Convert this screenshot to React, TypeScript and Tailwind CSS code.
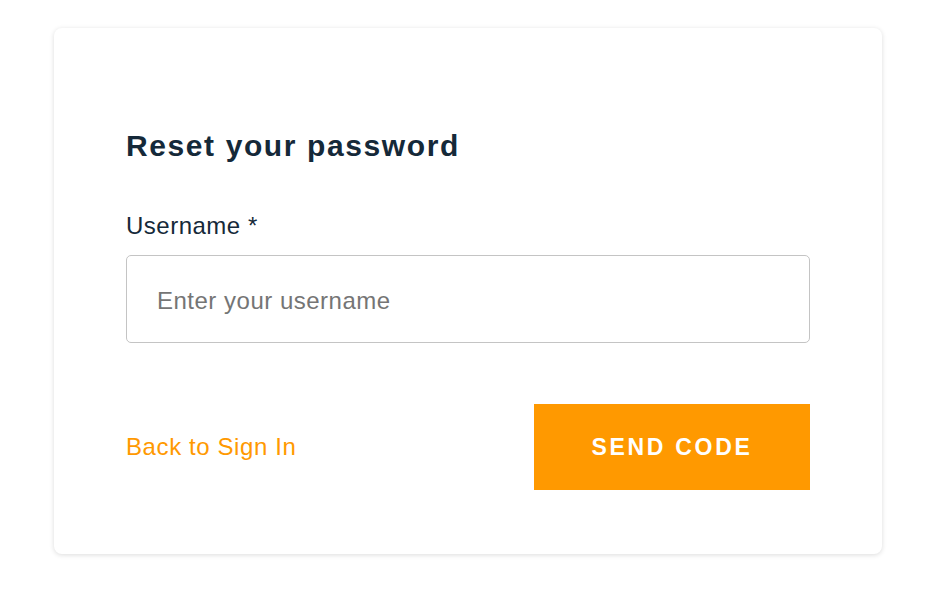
import React from 'react';

const font = { fontFamily: '"Liberation Sans", Arial, sans-serif' };

const ResetPassword = () => {
  return (
    <div className="min-h-[596px] w-[930px] bg-white pt-[28px] pl-[54px]" style={font}>
      <div className="w-[828px] rounded-[8px] bg-white px-[72px] pt-[103px] pb-[64px] shadow-[0_1px_5px_rgba(0,0,0,0.14)]">
        <h1 className="text-[30px] leading-[30px] font-bold tracking-[1.6px] text-[#152939]">
          Reset your password
        </h1>
        <label className="mt-[51px] block text-[24px] leading-[28px] tracking-[0.5px] text-[#152939]">
          Username *
        </label>
        <input
          type="text"
          placeholder="Enter your username"
          className="mt-[15px] block h-[88px] w-full rounded-[5px] border-[1.5px] border-[#c4c4c4] px-[30px] pt-[4px] text-[24px] tracking-[0.5px] text-[#152939] outline-none placeholder:text-[#757575]"
        />
        <div className="mt-[61px] flex items-center justify-between">
          <a className="text-[24px] tracking-[0.6px] text-[#ff9900]">Back to Sign In</a>
          <button className="flex h-[86px] w-[276px] items-center justify-center bg-[#ff9900] text-[23px] font-bold tracking-[2.7px] text-white">
            SEND CODE
          </button>
        </div>
      </div>
    </div>
  );
};

export default function App() {
  return <ResetPassword />;
}
